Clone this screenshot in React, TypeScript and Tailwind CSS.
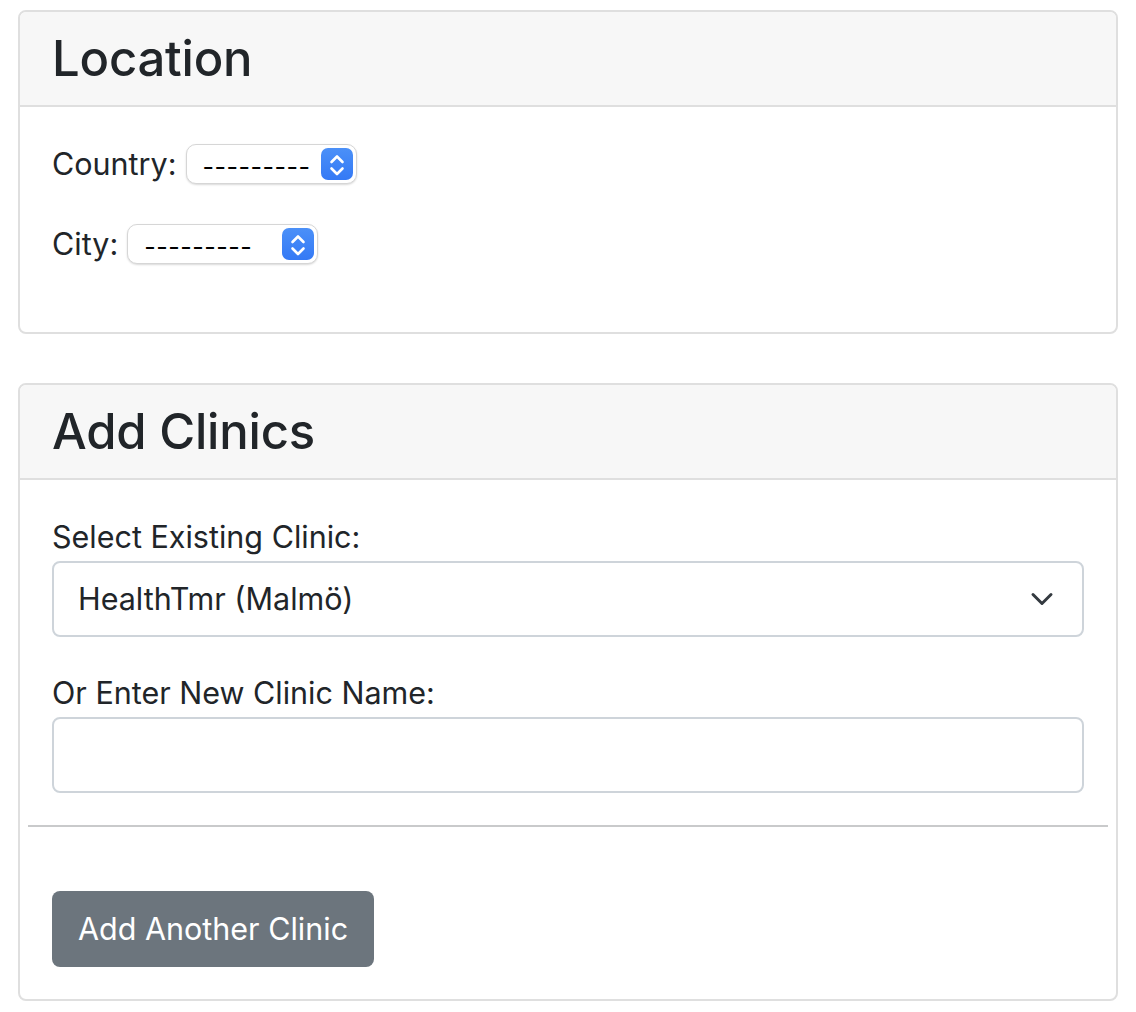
import React from 'react';

const font = {fontFamily: 'Inter, "Liberation Sans", sans-serif'};

// macOS-style native select with blue stepper
const NativeSelect: React.FC<{width: string}> = ({width}) => {
  return (
    <div
      className={`${width} h-[40px] ml-[9px] rounded-[10px] bg-white border border-[#d6d6d6] shadow-[0_1px_2px_rgba(0,0,0,0.15)] flex items-center justify-between pl-[16px] pr-[3px] shrink-0`}>
      <span className="text-[25px] leading-none text-black whitespace-nowrap mt-[6px] tracking-[0.5px]">---------</span>
      <span className="w-[32px] h-[32px] shrink-0 rounded-[7px] bg-gradient-to-b from-[#4b90f8] to-[#3479f5] flex items-center justify-center">
        <svg width="32" height="32" viewBox="0 0 32 32" fill="none">
          <path
            d="M10.5 14 L16 8.5 L21.5 14"
            stroke="white"
            strokeWidth="2.6"
            strokeLinecap="round"
            strokeLinejoin="round"
          />
          <path
            d="M10.5 20.5 L16 26 L21.5 20.5"
            stroke="white"
            strokeWidth="2.6"
            strokeLinecap="round"
            strokeLinejoin="round"
          />
        </svg>
      </span>
    </div>
  );
};

const CardHeader: React.FC<{title: string}> = ({title}) => (
  <div className="h-[95px] bg-[#f7f7f7] border-b-2 border-[#dfdfdf] px-[32px] flex items-center">
    <h2 className="text-[49px] font-medium leading-none text-[#212529] tracking-[-0.2px]">
      {title}
    </h2>
  </div>
);

export default function App() {
  return (
    <div className="min-h-[1012px] bg-white pt-[10px] pl-[18px]" style={font}>
      <div className="w-[1100px] text-[#212529]">
        {/* Location */}
        <section className="rounded-[8px] border-2 border-[#dfdfdf] overflow-hidden">
          <CardHeader title="Location" />
          <div className="px-[32px] pt-[33px] pb-[32px] text-[30.5px]">
            <div className="h-[48px] flex items-center mb-[32px]">
              <span>Country:</span>
              <NativeSelect width="w-[171px]" />
            </div>
            <div className="h-[48px] flex items-center mb-[32px]">
              <span>City:</span>
              <NativeSelect width="w-[191px]" />
            </div>
          </div>
        </section>

        {/* Add Clinics */}
        <section className="mt-[49px] rounded-[8px] border-2 border-[#dfdfdf] overflow-hidden">
          <CardHeader title="Add Clinics" />
          <div className="px-[32px] pt-[33px] pb-[32px] text-[30.5px]">
            <label className="h-[48px] flex items-center">Select Existing Clinic:</label>
            <div className="h-[76px] rounded-[8px] border-2 border-[#ced4da] bg-white flex items-center justify-between pl-[24px] pr-[28px]">
              <span>HealthTmr (Malmö)</span>
              <svg width="24" height="24" viewBox="0 0 16 16" fill="none">
                <path
                  d="m2 5 6 6 6-6"
                  stroke="#343a40"
                  strokeWidth="2"
                  strokeLinecap="round"
                  strokeLinejoin="round"
                />
              </svg>
            </div>

            <label className="mt-[32px] h-[48px] flex items-center">Or Enter New Clinic Name:</label>
            <div className="h-[76px] rounded-[8px] border-2 border-[#ced4da] bg-white"></div>

            <div className="mt-[32px] -mx-[24px] h-[2px] bg-[#c9cacb]"></div>

            <button className="mt-[64px] h-[76px] px-[26px] rounded-[8px] bg-[#6c757d] text-white text-[30.5px]">
              Add Another Clinic
            </button>
          </div>
        </section>
      </div>
    </div>
  );
}
